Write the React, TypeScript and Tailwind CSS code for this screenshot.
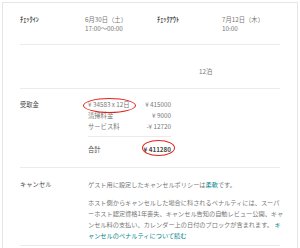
export default function App() {
  return (
    <div className="relative w-[300px] h-[248px] overflow-hidden bg-white pt-[2px] pl-[2px] font-['Noto_Sans_CJK_JP',sans-serif] text-[6.3px] text-[#767676]">
      <div className="w-[296px] h-[260px] border-x border-t border-[#e6e6e6] pl-[17px]">
        <div className="w-[260px]">
          {/* check-in / check-out */}
          <div className="flex pt-[12px] pb-[11px] leading-[9px] border-b border-[#ebebeb]">
            <div className="flex w-[137px]">
              <div className="w-[65px] text-[#484848] font-semibold">ﾁｪｯｸｲﾝ</div>
              <div>
                <div>6月30日（土）</div>
                <div>17:00〜00:00</div>
              </div>
            </div>
            <div className="flex">
              <div className="w-[65px] text-[#484848] font-semibold">ﾁｪｯｸｱｳﾄ</div>
              <div>
                <div>7月12日（木）</div>
                <div>10:00</div>
              </div>
            </div>
          </div>

          {/* nights */}
          <div className="pt-[21px] pb-[11px] leading-[11px] pl-[179px] border-b border-[#ebebeb]">
            12泊
          </div>

          {/* payout */}
          <div className="flex pt-[10px] pb-[12px] leading-[11px] border-b border-[#ebebeb]">
            <div className="w-[68px] text-[#484848]">受取金</div>
            <div className="w-[83px]">
              <div className="border-b border-[#ebebeb] pb-[4px]">
                <div className="flex justify-between">
                  <span>¥ 34583 x 12日</span>
                  <span>¥ 415000</span>
                </div>
                <div className="flex justify-between">
                  <span>清掃料金</span>
                  <span>¥ 9000</span>
                </div>
                <div className="flex justify-between">
                  <span>サービス料</span>
                  <span>-¥ 12720</span>
                </div>
              </div>
              <div className="flex justify-between pt-[7px]">
                <span className="text-[#484848]">合計</span>
                <span className="text-[#484848] font-bold">¥ 411280</span>
              </div>
            </div>
          </div>

          {/* cancellation */}
          <div className="flex pt-[11px] pb-[4px] leading-[11px] border-b border-[#ebebeb]">
            <div className="w-[68px] shrink-0 text-[#484848]">キャンセル</div>
            <div className="w-[197px] shrink-0 text-[6.2px]">
              <div>
                ゲスト用に設定したキャンセルポリシーは<span className="text-[#008489]">柔軟</span>です。
              </div>
              <p className="mt-[7px]">
                ホスト側からキャンセルした場合に科されるペナルティには、スーパーホスト認定資格1年喪失、キャンセル告知の自動レビュー公開、キャンセル料の支払い、カレンダー上の日付のブロックが含まれます。
                <span className="text-[#008489]"> キャンセルのペナルティについて読む</span>
              </p>
            </div>
          </div>
        </div>
      </div>

      {/* red annotation ellipses */}
      <div className="absolute left-[83px] top-[98px] w-[53px] h-[15px] rounded-[50%] border-[1.5px] border-[#e3211c]" />
      <div className="absolute left-[142px] top-[140px] w-[33px] h-[16px] rounded-[50%] border-[1.5px] border-[#e3211c]" />
    </div>
  );
}
